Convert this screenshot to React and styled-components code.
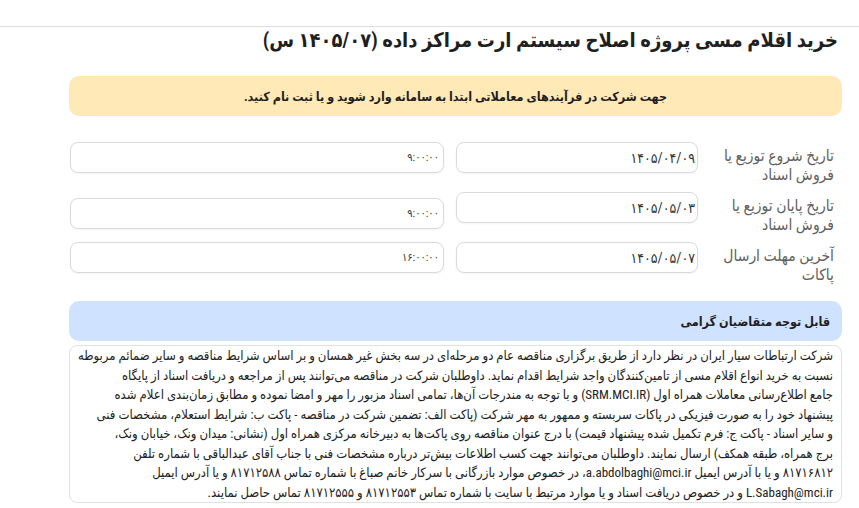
import React from 'react';
import styled, { createGlobalStyle } from 'styled-components';

const GlobalStyle = createGlobalStyle`
  body {
    margin: 0;
    background: #fff;
    font-family: "Roboto", "DejaVu Sans Condensed", "DejaVu Sans", sans-serif;
    font-stretch: condensed;
    color: #212529;
  }
`;

const TopBar = styled.div`
  height: 26px;
  border-bottom: 1px solid #dcdcdc;
`;

const Page = styled.main`
  direction: rtl;
  padding: 0 17px 0 69px;
`;

const Title = styled.h1`
  margin: 0;
  padding-right: 4px;
  font-size: 20px;
  line-height: 26px;
  font-weight: 700;
  color: #1f1f1f;
`;

const Notice = styled.div`
  display: flex;
  align-items: center;
  justify-content: center;
  height: 40px;
  margin-top: 23px;
  padding: 0 19px;
  border-radius: 10px;
  background: #ffe9b6;
  font-size: 12.5px;
  font-weight: 700;
  color: #1f1f1f;
`;

const Fields = styled.section`
  margin-top: 26px;
`;

const FieldRow = styled.div`
  display: grid;
  grid-template-columns: 132px 242px 374px;
  column-gap: 12px;
  align-items: start;
  min-height: 44px;
  margin-bottom: ${(p) => (p.$last ? '15px' : '6px')};
`;

const FieldLabel = styled.label`
  padding-top: 5px;
  padding-right: 8px;
  font-size: 15.5px;
  line-height: 19px;
  color: #606060;
`;

const ValueBox = styled.div`
  box-sizing: border-box;
  height: 31px;
  margin-top: ${(p) => p.$shift || 0}px;
  padding: ${(p) => (p.$small ? '0 4px' : '0 2px')};
  display: flex;
  align-items: center;
  border: 1px solid #dadada;
  border-radius: 8px;
  box-shadow: 0 1px 2px rgba(0, 0, 0, 0.05);
  font-size: ${(p) => (p.$small ? '11px' : '14px')};
  color: #333;
`;

const InfoHeader = styled.div`
  display: flex;
  align-items: center;
  height: 40px;
  padding: 0 12px;
  border-radius: 10px;
  background: #cfe2ff;
  font-size: 12.5px;
  font-weight: 700;
  color: #1f1f1f;
`;

const InfoBody = styled.div`
  margin-top: 4px;
  padding: 0 8px;
  border: 1px solid #dee2e6;
  border-radius: 8px;
  font-size: 13px;
  line-height: 19.5px;
  color: #222;
  white-space: nowrap;
`;

const schedule = [
  { label: ['تاریخ شروع توزیع یا', 'فروش اسناد'], date: '۱۴۰۵/۰۴/۰۹', time: '۹:۰۰:۰۰' },
  { label: ['تاریخ پایان توزیع یا', 'فروش اسناد'], date: '۱۴۰۵/۰۵/۰۳', time: '۹:۰۰:۰۰', shift: 6 },
  { label: ['آخرین مهلت ارسال', 'پاکات'], date: '۱۴۰۵/۰۵/۰۷', time: '۱۶:۰۰:۰۰' },
];

const noticeLines = [
  'شرکت ارتباطات سیار ایران در نظر دارد از طریق برگزاری مناقصه عام دو مرحله‌ای در سه بخش غیر همسان و بر اساس شرایط مناقصه و سایر ضمائم مربوطه',
  'نسبت به خرید انواع اقلام مسی از تامین‌کنندگان واجد شرایط اقدام نماید. داوطلبان شرکت در مناقصه می‌توانند پس از مراجعه و دریافت اسناد از پایگاه',
  'جامع اطلاع‌رسانی معاملات همراه اول (SRM.MCI.IR) و با توجه به مندرجات آن‌ها، تمامی اسناد مزبور را مهر و امضا نموده و مطابق زمان‌بندی اعلام شده',
  'پیشنهاد خود را به صورت فیزیکی در پاکات سربسته و ممهور به مهر شرکت (پاکت الف: تضمین شرکت در مناقصه - پاکت ب: شرایط استعلام، مشخصات فنی',
  'و سایر اسناد - پاکت ج: فرم تکمیل شده پیشنهاد قیمت) با درج عنوان مناقصه روی پاکت‌ها به دبیرخانه مرکزی همراه اول (نشانی: میدان ونک، خیابان ونک،',
  'برج همراه، طبقه همکف) ارسال نمایند. داوطلبان می‌توانند جهت کسب اطلاعات بیش‌تر درباره مشخصات فنی با جناب آقای عبدالباقی با شماره تلفن',
  '۸۱۷۱۶۸۱۲ و یا با آدرس ایمیل a.abdolbaghi@mci.ir، در خصوص موارد بازرگانی با سرکار خانم صباغ با شماره تماس ۸۱۷۱۲۵۸۸ و یا آدرس ایمیل',
  'L.Sabagh@mci.ir و در خصوص دریافت اسناد و یا موارد مرتبط با سایت با شماره تماس ۸۱۷۱۲۵۵۳ و ۸۱۷۱۲۵۵۵ تماس حاصل نمایند.',
];

export default function App() {
  return (
    <>
      <GlobalStyle />
      <TopBar />
      <Page>
        <Title>خرید اقلام مسی پروژه اصلاح سیستم ارت مراکز داده (۱۴۰۵/۰۷ س)</Title>
        <Notice>جهت شرکت در فرآیندهای معاملاتی ابتدا به سامانه وارد شوید و یا ثبت نام کنید.</Notice>
        <Fields>
          {schedule.map((row, i) => (
            <FieldRow key={row.date} $last={i === schedule.length - 1}>
              <FieldLabel>
                {row.label[0]}
                <br />
                {row.label[1]}
              </FieldLabel>
              <ValueBox>{row.date}</ValueBox>
              <ValueBox $small $shift={row.shift}>{row.time}</ValueBox>
            </FieldRow>
          ))}
        </Fields>
        <InfoHeader>قابل توجه متقاضیان گرامی</InfoHeader>
        <InfoBody>
          {noticeLines.map((line, i) => (
            <div key={i} dir="rtl">{line}</div>
          ))}
        </InfoBody>
      </Page>
    </>
  );
}
